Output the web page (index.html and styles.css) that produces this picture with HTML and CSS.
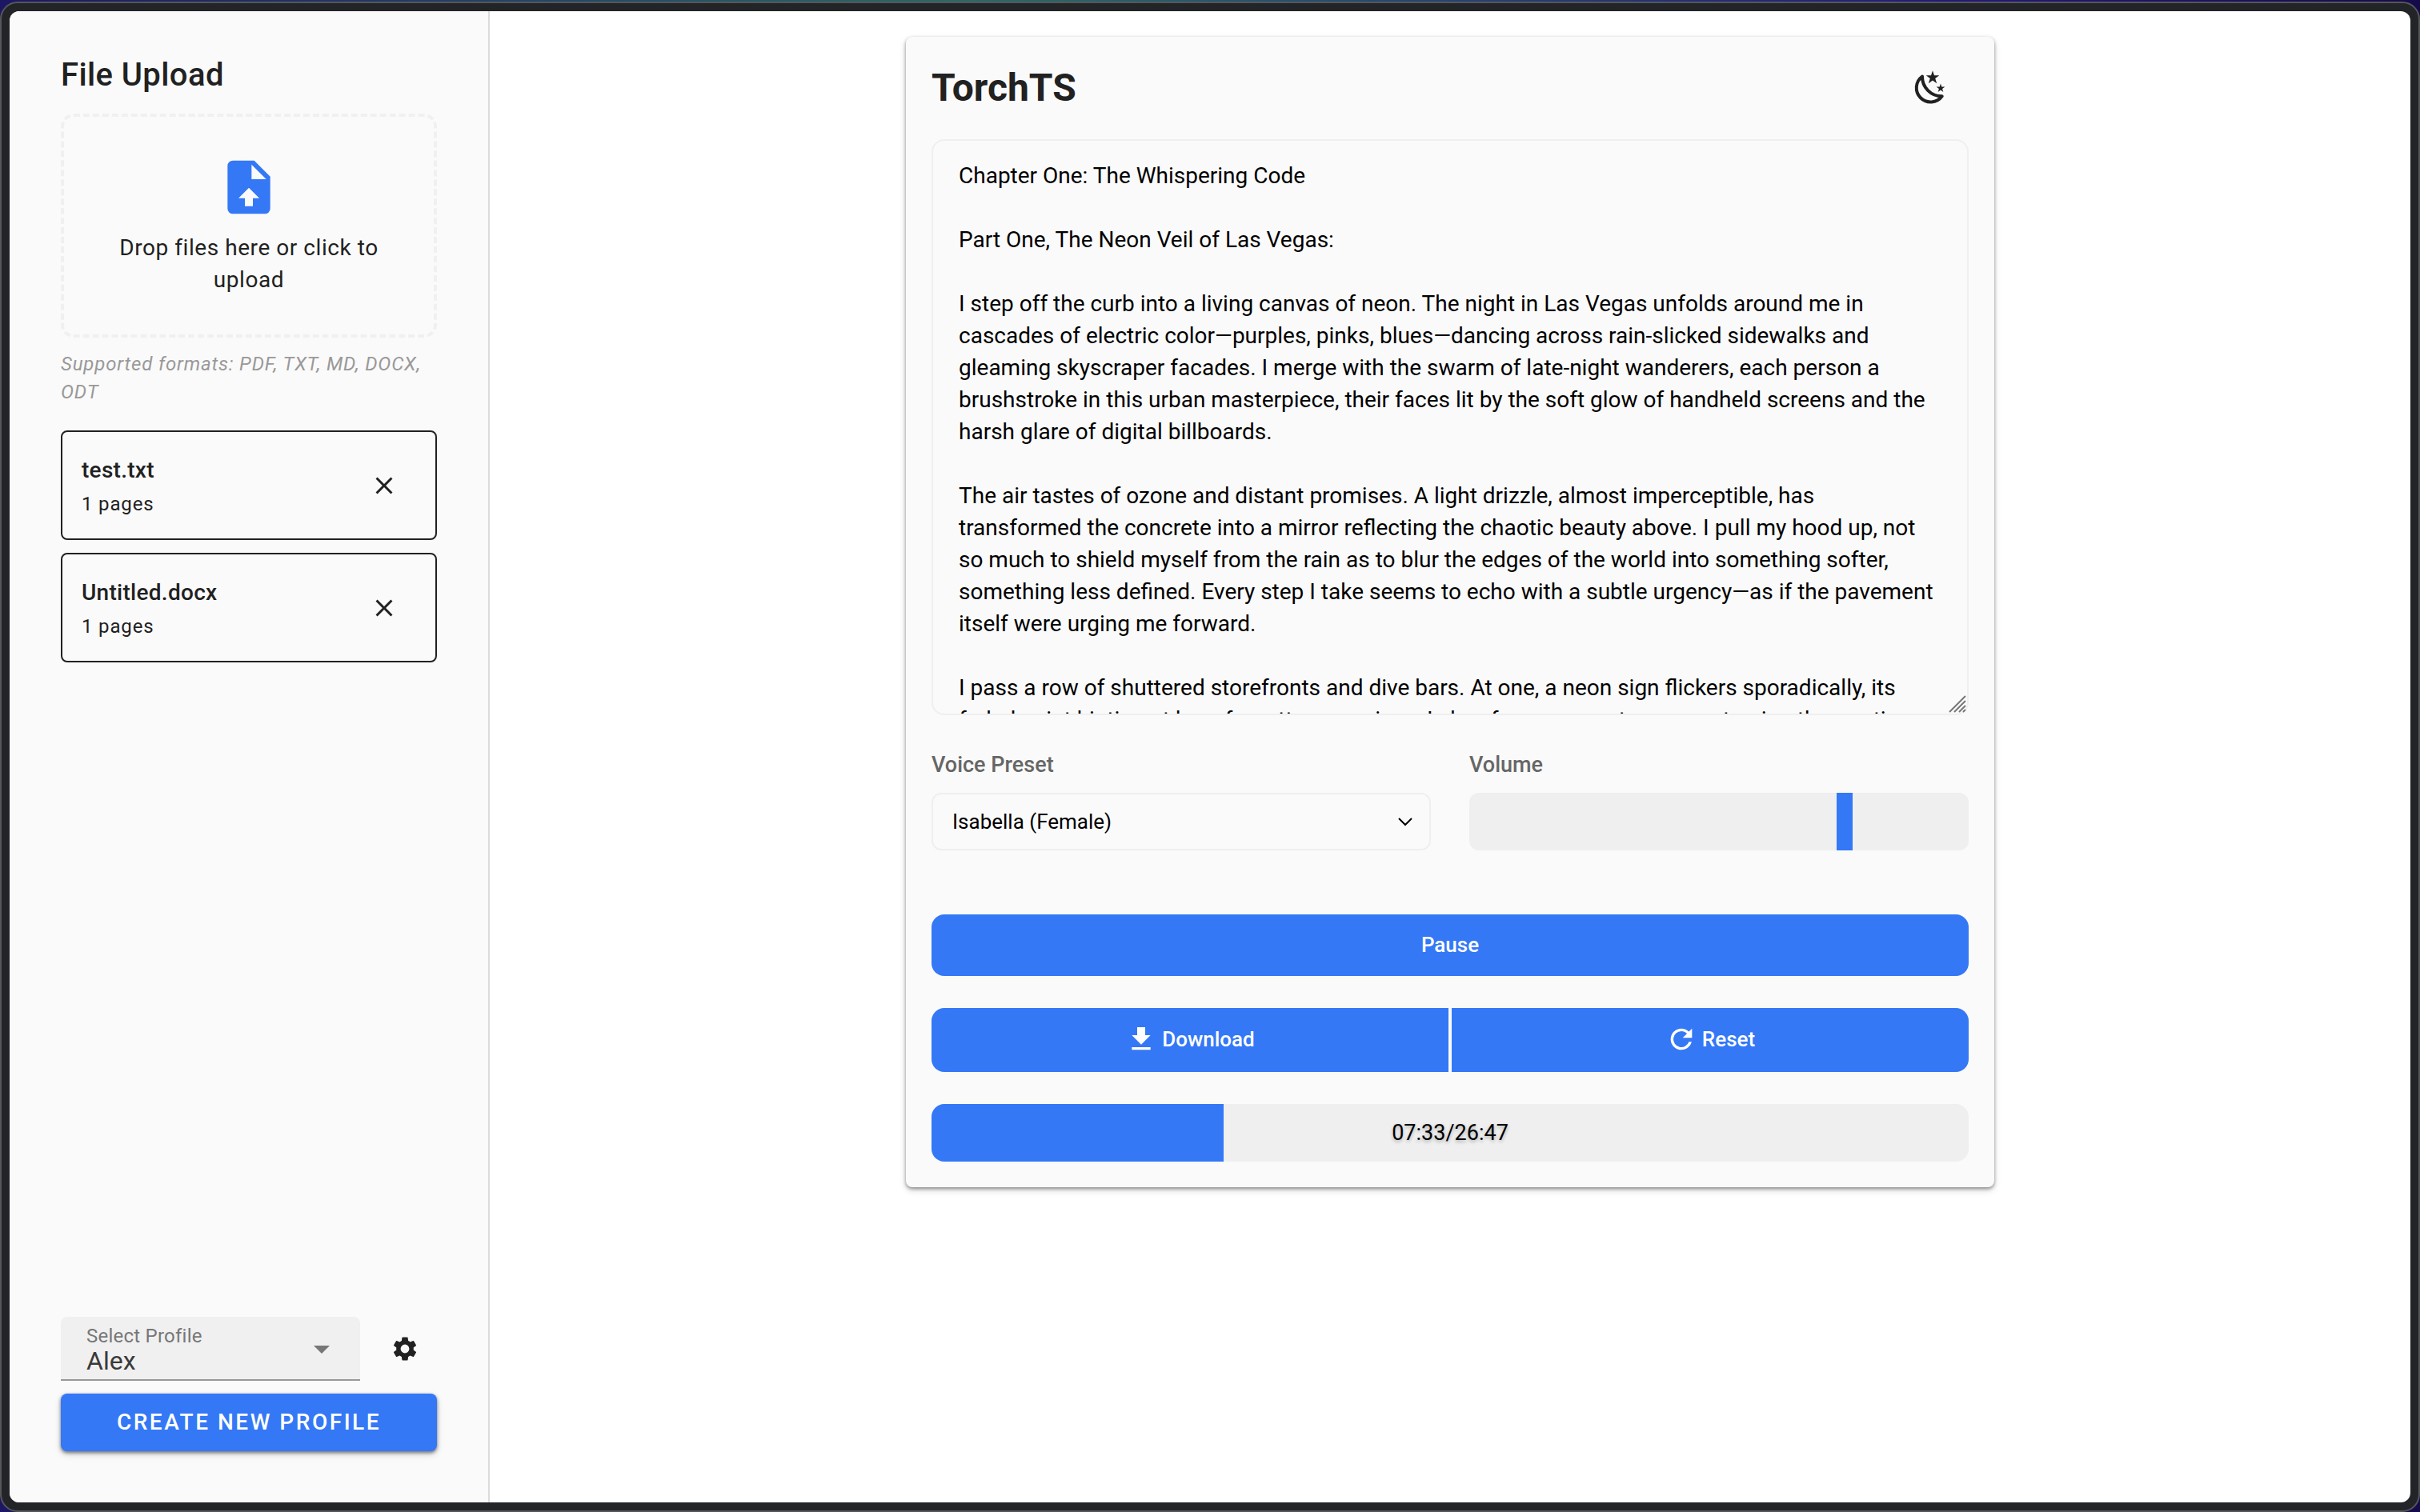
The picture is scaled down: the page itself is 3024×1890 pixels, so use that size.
FILE: index.html
```html
<!DOCTYPE html>
<html lang="en">
<head>
<meta charset="utf-8">
<title>TorchTS</title>
<link rel="stylesheet" href="styles.css">
</head>
<body>
<div class="window">
  <div class="app">
    <aside class="sidebar">
      <h2 class="sidebar-title">File Upload</h2>
      <button class="dropzone" type="button">
        <svg class="dropzone-icon" viewBox="0 0 24 24" aria-hidden="true"><path d="M14 2H6a2 2 0 0 0-2 2v16a2 2 0 0 0 2 2h12a2 2 0 0 0 2-2V8l-6-6zm-1 1.500L18.500 9H13V3.500zM12 12.200l3.900 3.900h-2.400v3h-3v-3H8.100L12 12.200z"/></svg>
        <span class="dropzone-text">Drop files here or click to upload</span>
      </button>
      <p class="formats">Supported formats: PDF, TXT, MD, DOCX, ODT</p>
      <ul class="files">
        <li class="file">
          <div class="file-info"><span class="file-name">test.txt</span><span class="file-pages">1 pages</span></div>
          <button class="icon-button" type="button" aria-label="Remove test.txt"><svg class="icon-small" viewBox="0 0 24 24"><path d="M19 6.410 17.590 5 12 10.590 6.410 5 5 6.410 10.590 12 5 17.590 6.410 19 12 13.410 17.590 19 19 17.590 13.410 12z"/></svg></button>
        </li>
        <li class="file">
          <div class="file-info"><span class="file-name">Untitled.docx</span><span class="file-pages">1 pages</span></div>
          <button class="icon-button" type="button" aria-label="Remove Untitled.docx"><svg class="icon-small" viewBox="0 0 24 24"><path d="M19 6.410 17.590 5 12 10.590 6.410 5 5 6.410 10.590 12 5 17.590 6.410 19 12 13.410 17.590 19 19 17.590 13.410 12z"/></svg></button>
        </li>
      </ul>
      <div class="profile">
        <div class="profile-row">
          <div class="profile-field">
            <label class="profile-label" for="profile">Select Profile</label>
            <select class="profile-select" id="profile"><option>Alex</option></select>
            <svg class="profile-arrow" viewBox="0 0 20 10" aria-hidden="true"><path d="M0 0h20L10 10z"/></svg>
          </div>
          <button class="icon-button" type="button" aria-label="Profile settings"><svg class="icon-small" viewBox="0 0 24 24"><path d="M19.140 12.940c.040-.300.060-.610.060-.940 0-.320-.020-.640-.070-.940l2.030-1.580a.490.490 0 0 0 .120-.610l-1.920-3.320a.490.490 0 0 0-.590-.220l-2.390.960a7 7 0 0 0-1.620-.940l-.360-2.540A.480.480 0 0 0 13.920 2.400h-3.840a.480.480 0 0 0-.470.410l-.360 2.540c-.590.240-1.130.570-1.620.940l-2.390-.960a.480.480 0 0 0-.590.220L2.740 8.870a.480.480 0 0 0 .120.610l2.030 1.580c-.050.300-.090.630-.090.940s.020.640.070.940l-2.030 1.580a.490.490 0 0 0-.120.610l1.920 3.320c.120.220.370.290.590.220l2.390-.960c.500.380 1.030.700 1.620.940l.360 2.540c.050.240.240.410.480.410h3.840c.240 0 .440-.170.470-.410l.360-2.540a6.800 6.800 0 0 0 1.620-.940l2.390.960c.220.080.470 0 .590-.220l1.920-3.320a.480.480 0 0 0-.120-.610l-2.010-1.580zM12 15.600A3.600 3.600 0 1 1 12 8.400a3.600 3.600 0 0 1 0 7.200z"/></svg></button>
        </div>
        <button class="create-button" type="button">CREATE NEW PROFILE</button>
      </div>
    </aside>
    <main class="main">
      <section class="card">
        <header class="card-header">
          <h1 class="card-title">TorchTS</h1>
          <button class="icon-button icon-button-large" type="button" aria-label="Toggle dark mode"><svg class="icon-moon" viewBox="0 0 48 48"><path class="moon-outline" d="M14 9.500A17.700 17.700 0 1 0 38.700 34.300A24.500 24.500 0 0 1 14 9.500z"/><path d="M27 2.300l2 6h6.300l-5.100 3.700 2 6.200-5.200-3.800-5.200 3.800 2-6.200-5.100-3.700h6.300zM37 18.500l1.300 4h4.100l-3.300 2.500 1.200 3.900-3.300-2.400-3.300 2.400 1.200-3.900-3.300-2.500h4.100z"/></svg></button>
        </header>
        <div class="editor">
          <textarea class="editor-text" aria-label="Text to speak">Chapter One: The Whispering Code

Part One, The Neon Veil of Las Vegas:

I step off the curb into a living canvas of neon. The night in Las Vegas unfolds around me in cascades of electric color—purples, pinks, blues—dancing across rain-slicked sidewalks and gleaming skyscraper facades. I merge with the swarm of late-night wanderers, each person a brushstroke in this urban masterpiece, their faces lit by the soft glow of handheld screens and the harsh glare of digital billboards.

The air tastes of ozone and distant promises. A light drizzle, almost imperceptible, has transformed the concrete into a mirror reflecting the chaotic beauty above. I pull my hood up, not so much to shield myself from the rain as to blur the edges of the world into something softer, something less defined. Every step I take seems to echo with a subtle urgency—as if the pavement itself were urging me forward.

I pass a row of shuttered storefronts and dive bars. At one, a neon sign flickers sporadically, its faded paint hinting at long-forgotten promises. I slow for a moment, my eyes tracing the erratic</textarea>
          <svg class="editor-grip" viewBox="0 0 22 22" aria-hidden="true"><path d="M1 21 21 1M7 21 21 7M13 21l8-8M18 21l3-3"/></svg>
        </div>
        <div class="settings">
          <div class="setting">
            <label class="setting-label" for="voice">Voice Preset</label>
            <div class="voice">
              <select class="voice-select" id="voice"><option>Isabella (Female)</option></select>
              <svg class="voice-arrow" viewBox="0 0 18 12" aria-hidden="true"><path d="M1 2l8 8 8-8"/></svg>
            </div>
          </div>
          <div class="setting">
            <label class="setting-label" for="volume">Volume</label>
            <input class="volume" id="volume" type="range" min="0" max="100" value="76">
          </div>
        </div>
        <button class="action action-pause" type="button">Pause</button>
        <div class="action-row">
          <button class="action" type="button"><svg class="action-icon" viewBox="0 0 24 24"><path d="M19 9h-4V3H9v6H5l7 7 7-7zM5 18v2h14v-2H5z"/></svg>Download</button>
          <button class="action" type="button"><svg class="action-icon" viewBox="0 0 24 24"><path d="M17.650 6.350A7.960 7.960 0 0 0 12 4a8 8 0 1 0 7.730 10h-2.080A6 6 0 1 1 12 6c1.660 0 3.140.690 4.220 1.780L13 11h7V4l-2.350 2.350z"/></svg>Reset</button>
        </div>
        <div class="progress" role="progressbar" aria-label="Playback" aria-valuemin="0" aria-valuemax="1607" aria-valuenow="453">
          <div class="progress-fill" style="width: 28.200%"></div>
          <span class="progress-time">07:33/26:47</span>
        </div>
      </section>
    </main>
  </div>
</div>
</body>
</html>
```
FILE: styles.css
```css
* {
  box-sizing: border-box;
}

body {
  margin: 0;
  padding-top: 2px;
  background: linear-gradient(90deg, #1d1763, #2a6a66 40%, #231a78 80%, #150b4a);
  color: #212121;
  font: 28px/40px Roboto, sans-serif;
}

h1, h2, p, ul {
  margin: 0;
  padding: 0;
}

button, select, textarea, input {
  margin: 0;
  font: inherit;
  color: inherit;
}

button {
  border: 0;
  cursor: pointer;
}

svg {
  display: block;
  flex: none;
  fill: currentColor;
}

.window {
  display: flex;
  min-height: calc(100vh - 2px);
  padding: 10px;
  border: 2px solid #55575a;
  border-radius: 22px;
  background: #222428;
}

.app {
  display: flex;
  flex: 1;
  overflow: hidden;
  border-radius: 12px;
  background: #fff;
}

.sidebar {
  display: flex;
  flex-direction: column;
  flex: none;
  width: 600px;
  padding: 48px 64px 64px;
  border-right: 2px solid #dcdcdc;
  background: #fafafa;
}

.sidebar-title {
  margin-bottom: 16px;
  font-size: 40px;
  line-height: 64px;
  font-weight: 500;
  letter-spacing: .01em;
}

.dropzone {
  display: flex;
  flex-direction: column;
  align-items: center;
  gap: 16px;
  padding: 48px;
  border: 4px dashed #f0f0f0;
  border-radius: 16px;
  background: none;
  letter-spacing: .02em;
}

.dropzone-icon {
  width: 80px;
  height: 80px;
  fill: #3478f6;
}

.formats {
  margin: 16px 0 30px;
  color: #999;
  font-size: 24px;
  font-style: italic;
  line-height: 35px;
  letter-spacing: .035em;
}

.files {
  display: flex;
  flex-direction: column;
  gap: 16px;
  list-style: none;
}

.file {
  display: flex;
  align-items: center;
  justify-content: space-between;
  height: 137px;
  padding: 0 24px;
  border: 2px solid #212121;
  border-radius: 8px;
}

.file-info {
  display: flex;
  flex-direction: column;
  gap: 2px;
  padding-top: 4px;
}

.file-name {
  font-weight: 500;
  letter-spacing: .01em;
}

.file-pages {
  font-size: 24px;
  letter-spacing: .035em;
}

.icon-button {
  display: flex;
  align-items: center;
  justify-content: center;
  width: 80px;
  height: 80px;
  padding: 0;
  background: none;
}

.icon-button-large {
  width: 96px;
  height: 96px;
}

.icon-small {
  width: 36px;
  height: 36px;
}

.icon-moon {
  width: 48px;
  height: 48px;
}

.moon-outline {
  fill: none;
  stroke: currentColor;
  stroke-width: 4;
  stroke-linejoin: round;
}

.profile {
  display: flex;
  flex-direction: column;
  gap: 16px;
  margin-top: auto;
}

.profile-row {
  display: flex;
  gap: 16px;
}

.profile-field {
  display: flex;
  position: relative;
  flex: 1;
}

.profile-label {
  position: absolute;
  top: 10px;
  left: 32px;
  color: #777;
  font-size: 24px;
  line-height: 28px;
  letter-spacing: .01em;
}

.profile-select {
  width: 100%;
  height: 80px;
  padding: 34px 32px 2px;
  appearance: none;
  border: 0;
  border-bottom: 2px solid #999;
  border-radius: 8px 8px 0 0;
  background: #f0f0f0;
  color: #3a3a3a;
  font-size: 32px;
}

.profile-arrow {
  position: absolute;
  top: 36px;
  right: 38px;
  width: 20px;
  height: 10px;
  fill: #777;
}

.create-button {
  height: 72px;
  border-radius: 8px;
  background: #3478f6;
  box-shadow: 0 2px 4px rgba(0, 0, 0, .5), 0 4px 10px rgba(0, 0, 0, .14);
  color: #fff;
  font-weight: 500;
  letter-spacing: .09em;
}

.main {
  display: flex;
  flex: 1;
  align-items: flex-start;
  justify-content: center;
  padding: 32px;
}

.card {
  width: 1360px;
  padding: 16px 32px 32px;
  border-radius: 8px;
  background: #fafafa;
  box-shadow: 0 2px 4px rgba(0, 0, 0, .4), 0 4px 10px rgba(0, 0, 0, .14);
}

.card-header {
  display: flex;
  align-items: center;
  justify-content: space-between;
  margin-bottom: 16px;
}

.card-title {
  font-size: 48px;
  line-height: 64px;
  font-weight: 700;
}

.editor {
  display: flex;
  position: relative;
}

.editor-text {
  width: 100%;
  height: 720px;
  padding: 24px 32px;
  resize: none;
  scrollbar-width: none;
  border: 2px solid #efefef;
  border-radius: 16px;
  background: none;
  color: #000;
}

.editor-grip {
  position: absolute;
  right: 3px;
  bottom: 3px;
  width: 22px;
  height: 22px;
  fill: none;
  stroke: #777;
  stroke-width: 2;
}

.settings {
  display: flex;
  gap: 48px;
  margin: 47px 0 80px;
}

.setting {
  display: flex;
  flex: 1;
  flex-direction: column;
  gap: 20px;
}

.setting-label {
  color: #666;
  font-size: 27px;
  font-weight: 500;
  line-height: 30px;
}

.voice {
  display: flex;
  position: relative;
}

.voice-select {
  width: 100%;
  height: 72px;
  padding: 0 24px;
  appearance: none;
  border: 2px solid #efefef;
  border-radius: 12px;
  background: none;
  color: #000;
  font-size: 26px;
}

.voice-arrow {
  position: absolute;
  top: 30px;
  right: 23px;
  width: 18px;
  height: 12px;
  fill: none;
  stroke: #000;
  stroke-width: 2;
}

.volume {
  width: 100%;
  height: 72px;
  overflow: hidden;
  appearance: none;
  border-radius: 12px;
  background: #efefef;
}

.volume::-webkit-slider-thumb {
  width: 20px;
  height: 72px;
  appearance: none;
  background: #3478f6;
}

.action {
  display: flex;
  flex: 1;
  align-items: center;
  justify-content: center;
  gap: 6px;
  height: 80px;
  padding: 0 0 2px;
  background: #3478f6;
  color: #fff;
  font-size: 26px;
  font-weight: 500;
}

.action-pause {
  width: 100%;
  height: 77px;
  border-radius: 16px;
}

.action-row {
  display: flex;
  gap: 4px;
  margin: 40px 0;
  overflow: hidden;
  border-radius: 16px;
}

.action-icon {
  width: 40px;
  height: 40px;
}

.progress {
  display: grid;
  height: 72px;
  overflow: hidden;
  border-radius: 16px;
  background: #efefef;
}

.progress-fill,
.progress-time {
  grid-area: 1 / 1;
}

.progress-fill {
  background: #3478f6;
}

.progress-time {
  place-self: center;
  color: #000;
  font-size: 27px;
  text-shadow: 0 2px 4px rgba(0, 0, 0, .3);
}
```
